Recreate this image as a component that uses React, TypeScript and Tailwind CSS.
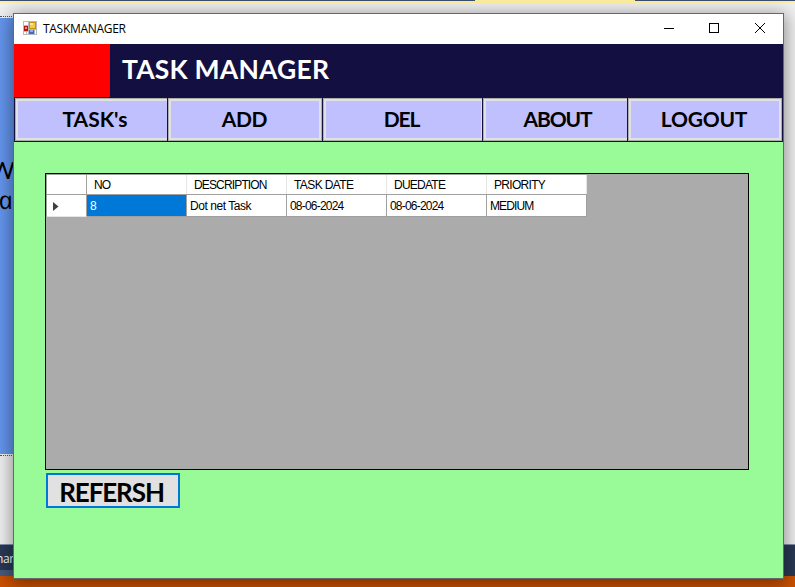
import React from "react";

const heading = "font-['Lato','Open_Sans',sans-serif] font-bold whitespace-nowrap";

function FormIcon() {
  return (
    <svg width="14" height="14" viewBox="0 0 14 14" shapeRendering="crispEdges">
      <rect width="14" height="14" fill="#b9b9bd" />
      <rect x="1" y="1" width="4" height="3" fill="#fff" />
      <rect x="1" y="11" width="2" height="2" fill="#fff" />
      <rect x="4" y="11" width="1" height="2" fill="#fff" />
      <rect x="12" y="9" width="1" height="4" fill="#fff" />
      <rect x="1" y="5" width="4" height="5" fill="#b5180c" />
      <rect x="2" y="6" width="2" height="2" fill="#f08d7c" />
      <rect x="6" y="1" width="7" height="7" fill="#c99110" />
      <rect x="7" y="2" width="5" height="5" fill="#fbc937" />
      <rect x="7" y="2" width="3" height="2" fill="#ffe99b" />
      <rect x="6" y="9" width="5" height="4" fill="#356fd6" />
      <rect x="7" y="9" width="3" height="2" fill="#83b1f6" />
    </svg>
  );
}

function Backdrop() {
  return (
    <div className="flex h-full flex-col bg-[#f0f0f0]">
      <div className="flex h-px bg-[#3b4f76]">
        <div className="ml-[475px] w-[160px] bg-[#fff09f]" />
      </div>
      <div className="h-[2px] bg-[#fff09f]" />
      <div className="h-[13px]" />
      <div className="h-[2px] w-[14px] border-t border-dotted border-[#555]" />
      <div className="h-[436px] w-[14px] overflow-hidden bg-[#6495ed] pt-[137px] text-[24px] leading-[30px] text-black">
        <div className="-ml-[10px] font-['Lato',sans-serif]">W</div>
        <div className="origin-bottom-left skew-x-[12deg] pl-px font-['Open_Sans',sans-serif] text-[25px] italic leading-[29px]">a</div>
      </div>
      <div className="h-[90px] w-[14px] pt-px">
        <div className="border-t border-dotted border-[#555]" />
      </div>
      <div className="h-px bg-[#8590b0]" />
      <div className="h-[25px] overflow-hidden bg-[#293955]">
        <div className="-ml-[4px] pt-[5px] font-['Open_Sans',sans-serif] text-[12px] leading-[18px] tracking-[-0.4px] text-white">nar</div>
      </div>
      <div className="flex h-[6px] bg-[#293955]">
        <div className="w-[14px] bg-[#465a7d]" />
      </div>
      <div className="flex-1 bg-[#ca5100]" />
    </div>
  );
}

function NavButton({ label, size, fit }: { label: string; size: string; fit: string }) {
  return (
    <button className={`h-[43px] shrink-0 border border-[#adadad] bg-[#e1e1e1] p-[2px] ${size}`}>
      <span className={`flex h-full w-full items-center justify-center bg-[#c0c0ff] pb-[2px] text-[21px] leading-none text-black ${heading}`}>
        <span className={fit}>{label}</span>
      </span>
    </button>
  );
}

const columns = [
  { name: "NO", value: "8", nameFit: "tracking-[-0.8px]", valueFit: "" },
  { name: "DESCRIPTION", value: "Dot net Task", nameFit: "tracking-[-0.85px]", valueFit: "tracking-[-0.45px]" },
  { name: "TASK DATE", value: "08-06-2024", nameFit: "tracking-[-0.6px]", valueFit: "tracking-[-0.8px]" },
  { name: "DUEDATE", value: "08-06-2024", nameFit: "tracking-[-0.75px]", valueFit: "tracking-[-0.8px]" },
  { name: "PRIORITY", value: "MEDIUM", nameFit: "tracking-[-0.7px]", valueFit: "tracking-[-0.9px]" },
];

function TaskGrid() {
  return (
    <div className="h-[297px] w-[704px] border border-black bg-[#ababab] font-['Liberation_Sans',Arial,sans-serif] text-[12px] text-black">
      <div className="w-[541px] border-l border-t border-[#a0a0a0]">
        <div className="flex h-[20px] w-[540px] border-b border-[#a0a0a0] bg-white">
          <div className="w-[40px] border-r border-[#a0a0a0]" />
          {columns.map((c) => (
            <div key={c.name} className={`w-[100px] whitespace-nowrap border-r border-[#e5e5e5] pl-[7px] leading-[21px] ${c.nameFit}`}>
              {c.name}
            </div>
          ))}
        </div>
        <div className="flex h-[22px] w-[540px] bg-white">
          <div className="flex w-[40px] items-center border-b border-r border-b-[#e5e5e5] border-r-[#a0a0a0] pl-[6px] pt-px">
            <svg width="6" height="9" viewBox="0 0 6 9"><path d="M0 0L5.5 4.5L0 9Z" fill="#404040" /></svg>
          </div>
          {columns.map((c, i) => (
            <div key={c.name} className={`w-[100px] whitespace-nowrap border-b border-r border-[#a0a0a0] pl-[3px] leading-[23px] ${c.valueFit} ${i === 0 ? "bg-[#0078d7] text-white" : ""}`}>
              {c.value}
            </div>
          ))}
        </div>
      </div>
    </div>
  );
}

export default function App() {
  return (
    <div className="relative h-[587px] w-[795px] overflow-hidden">
      <Backdrop />
      <div className="absolute left-[13px] top-[13px] flex h-[566px] w-[771px] flex-col border border-[#686868] bg-[#98fb98] shadow-[0_3px_16px_2px_rgba(0,0,0,0.4)]">
        <div className="flex h-[30px] shrink-0 items-center bg-white pl-[9px]">
          <div className="-mt-[2px]"><FormIcon /></div>
          <span className="ml-[6px] flex-1 font-['Open_Sans',sans-serif] text-[12px] leading-none tracking-[-0.3px] text-black">TASKMANAGER</span>
          <svg width="120" height="30" viewBox="0 0 120 30" fill="none" stroke="#000" shapeRendering="crispEdges">
            <path d="M1 14.5H11" />
            <path d="M46.5 9.5h9v9h-9z" />
            <path d="M92 9L102 19M102 9L92 19" shapeRendering="auto" />
          </svg>
        </div>
        <div className="flex h-[54px] shrink-0 bg-[#130f40]">
          <div className="h-[53px] w-[96px] bg-[#ff0000]" />
          <h1 className={`pl-[12px] text-[26.5px] leading-[51px] tracking-[0.2px] text-white ${heading}`}>TASK MANAGER</h1>
        </div>
        <nav className="flex h-[44px] shrink-0 gap-px bg-[#130f40] px-px">
          <NavButton label="TASK's" size="w-[152px] border-r-0 pr-0" fit="pl-[5px]" />
          <NavButton label="ADD" size="w-[154px]" fit="tracking-[-0.4px] pr-px" />
          <NavButton label="DEL" size="w-[159px] border-r-0 pr-px" fit="tracking-[-1.1px] pr-[4px]" />
          <NavButton label="ABOUT" size="w-[144px] border-r-0 pr-0" fit="tracking-[-1.1px] pl-[2px]" />
          <NavButton label="LOGOUT" size="w-[154px]" fit="tracking-[-0.2px] pr-[2px]" />
        </nav>
        <main className="flex flex-1 flex-col items-start pl-[31px] pt-[31px]">
          <TaskGrid />
          <button className={`ml-px mt-[3px] h-[35px] w-[134px] border-2 border-[#0078d7] bg-[#e1e1e1] pr-[3px] pt-[3px] text-[26px] leading-[28px] tracking-[-1.1px] text-black ${heading}`}>REFERSH</button>
        </main>
      </div>
    </div>
  );
}
